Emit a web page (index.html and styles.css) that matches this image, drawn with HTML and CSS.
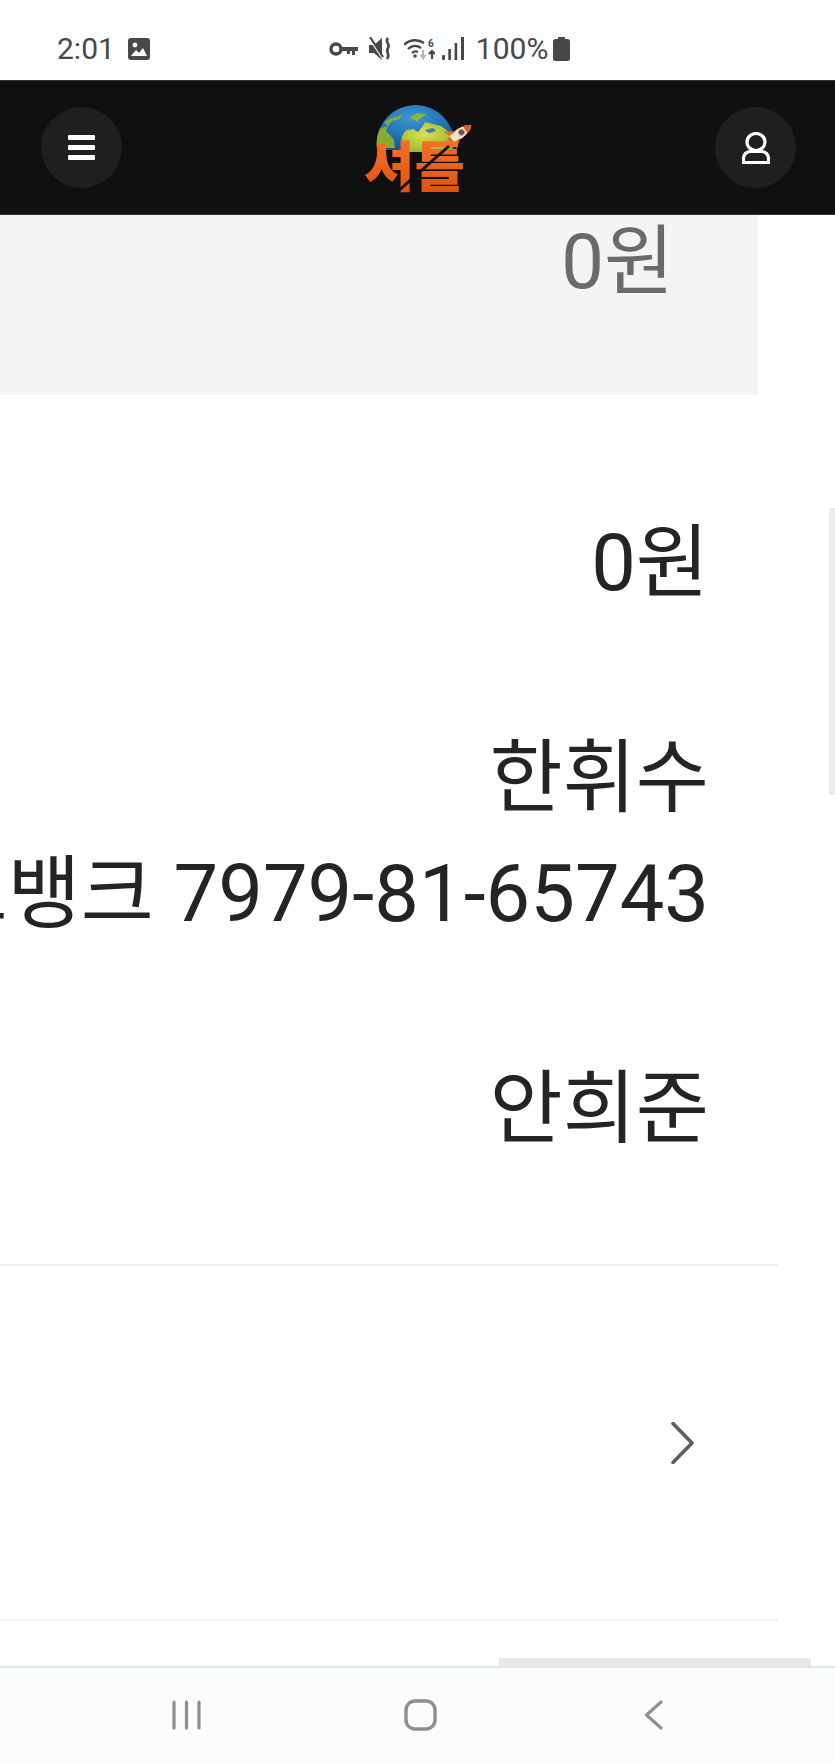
FILE: index.html
```html
<!DOCTYPE html>
<html lang="ko">
<head>
<meta charset="utf-8">
<title>계좌 정보</title>
<link rel="stylesheet" href="styles.css">
</head>
<body>
<div class="phone">
  <div class="status">
    <div class="status-left">
      <span class="clock">2:01</span>
      <svg class="ic-image" viewBox="0 0 22 22"><rect width="22" height="22" rx="3" fill="#484848"/><circle cx="7" cy="7" r="2.4" fill="#fff"/><path d="M3 18l5-6 3 3 4-5 4 8z" fill="#fff"/></svg>
    </div>
    <div class="status-right">
      <svg class="ic-key" viewBox="0 0 29 14"><circle cx="7" cy="7" r="5" fill="none" stroke="#484848" stroke-width="3.4"/><path d="M12 5h17v4h-3v4h-3V9h-2v3h-3V9h-6z" fill="#484848"/></svg>
      <svg class="ic-mute" viewBox="0 0 23 24"><path d="M0 8h5l8-7v22l-8-7H0z" fill="#484848"/><path d="M1 2l13 20" stroke="#fcfdff" stroke-width="2"/><path d="M1 0l13 20" stroke="#484848" stroke-width="2.2"/><path d="M19 1c-4 4 3 6 0 10s3 6-1 11" fill="none" stroke="#484848" stroke-width="2.6"/></svg>
      <svg class="ic-wifi" viewBox="0 0 31 23"><g fill="none" stroke="#484848" stroke-width="2.4"><path d="M0 8c6-6 14-6 20-2"/><path d="M4 12c4-4 9-4 13-1"/><path d="M8 16c2-2 4-2 6-1"/></g><circle cx="11" cy="19" r="1.8" fill="#484848"/><path d="M19 13v8l-2.500-3M19 21l2.500-3" fill="none" stroke="#b5b5b5" stroke-width="2"/><path d="M28 22v-8m-3 3l3-3 3 3" fill="none" stroke="#484848" stroke-width="2.2"/><text class="wifi-six" x="24" y="10">6</text></svg>
      <svg class="ic-signal" viewBox="0 0 22 23"><g fill="#484848"><rect x="0" y="18" width="3" height="5" rx="1"/><rect x="6.300" y="12" width="2.600" height="11"/><rect x="12.600" y="6" width="2.600" height="17"/><rect x="19" y="0" width="3" height="23"/></g></svg>
      <span class="battery-text">100%</span>
      <svg class="ic-battery" viewBox="0 0 17 24"><path d="M5 0h7v2h2.500A2.500 2.500 0 0 1 17 4.500V21.500A2.500 2.500 0 0 1 14.500 24h-12A2.500 2.500 0 0 1 0 21.500V4.500A2.500 2.500 0 0 1 2.500 2H5z" fill="#484848"/></svg>
    </div>
  </div>

  <header class="topbar">
    <button class="round-btn" aria-label="메뉴">
      <svg class="ic-menu" viewBox="0 0 27 25"><g fill="#fff"><rect width="27" height="5" rx="1"/><rect y="10" width="27" height="5" rx="1"/><rect y="20" width="27" height="5" rx="1"/></g></svg>
    </button>
    <svg class="logo" viewBox="0 0 115 95">
      <defs>
        <radialGradient id="sea" cx="0.45" cy="0.3" r="0.75"><stop offset="0" stop-color="#3a97d6"/><stop offset="1" stop-color="#0d5596"/></radialGradient>
        <radialGradient id="land" cx="0.45" cy="0.4" r="0.7"><stop offset="0" stop-color="#dbe04f"/><stop offset="1" stop-color="#93b52e"/></radialGradient>
        <linearGradient id="ember" x1="0" y1="0" x2="0" y2="1"><stop offset="0" stop-color="#fb7c2e"/><stop offset="1" stop-color="#dc4a0c"/></linearGradient>
        <clipPath id="globe-clip"><circle cx="56.500" cy="44" r="39"/></clipPath>
      </defs>
      <g clip-path="url(#globe-clip)">
        <rect x="16" y="4" width="82" height="46" fill="url(#sea)"/>
        <path d="M17 34l5-6 7-2-2 5 4 4 4 5 1 8H17z" fill="#86ab2e"/>
        <path d="M25 22l7-4 12-3-3 4-8 2-4 5z" fill="#86ab2e"/>
        <path d="M42 44c0-6 2-12 6-14l6-1 5 3 4-5 3-5 16 4 8 6 3 12 1 8H42z" fill="url(#land)"/>
        <path d="M50 18l8-5 10 1-6 4-4 4-4-3z" fill="#8db53a"/>
        <path d="M66 30l8-2 3 3-7 2z" fill="#2d7fc0"/>
      </g>
      <g transform="translate(2 8) rotate(55 98 26)">
        <path d="M98 11c5 5 6 14 4 24h-8c-2-10-1-19 4-24z" fill="#efe2d0"/>
        <path d="M98 11c2.500 2 3.600 4.500 4.300 7.500h-8.600c.7-3 1.800-5.500 4.300-7.500z" fill="#d9611d"/>
        <path d="M94 27l-7 10 7-2zM102 27l7 10-7-2z" fill="#e36a22"/>
        <path d="M94.500 35h7l-1.500 4h-4z" fill="#e36a22"/>
        <circle cx="98" cy="23" r="3" fill="#555" stroke="#e8a070" stroke-width="1"/>
      </g>
      <text class="logo-text" x="5" y="87" fill="url(#ember)" textLength="101" lengthAdjust="spacingAndGlyphs">셔틀</text>
      <path d="M37 93L90 46" stroke="#0f0f0f" stroke-width="3"/>
    </svg>
    <button class="round-btn" aria-label="내 정보">
      <svg class="ic-user" viewBox="0 0 28 32"><g fill="none" stroke="#fff" stroke-width="3.200"><ellipse cx="14" cy="10" rx="9" ry="8.500"/><path d="M1.500 30.500v-4c0-4 3-7 7-7h11c4 0 7 3 7 7v4z"/></g></svg>
    </button>
  </header>

  <main class="content">
    <section class="summary">
      <span class="summary-value">0원</span>
    </section>
    <section class="details">
      <div class="detail">0원</div>
      <div class="detail detail-holder">한휘수</div>
      <div class="detail">카카오뱅크 7979-81-65743</div>
      <div class="detail detail-name">안희준</div>
    </section>
    <a class="link-row">
      <svg class="ic-chevron" viewBox="0 0 23 42"><path d="M2 1.500l19 19.500L2 40.500" fill="none" stroke="#5e5e5e" stroke-width="3.600" stroke-linecap="round" stroke-linejoin="round"/></svg>
    </a>
    <div class="scroll-y"></div>
    <div class="scroll-x"></div>
  </main>

  <nav class="navbar">
    <svg class="ic-recent" viewBox="0 0 29 30"><g stroke="#8f8f8f" stroke-width="3.200" stroke-linecap="round"><path d="M2 2v26M14.500 2v26M27 2v26"/></g></svg>
    <svg class="ic-home" viewBox="0 0 33 32"><rect x="2" y="2" width="29" height="28" rx="9" fill="none" stroke="#8f8f8f" stroke-width="3.400"/></svg>
    <svg class="ic-back" viewBox="0 0 19 30"><path d="M17 2L2.500 15 17 28" fill="none" stroke="#8f8f8f" stroke-width="3.200" stroke-linecap="round" stroke-linejoin="round"/></svg>
  </nav>
</div>
</body>
</html>
```

FILE: styles.css
```css
* { box-sizing: border-box; }
html, body { margin: 0; padding: 0; }
body {
  width: 835px;
  height: 1763px;
  overflow: hidden;
  background: #fff;
  font-family: Roboto, "Noto Sans CJK KR", sans-serif;
}
.phone {
  display: flex;
  flex-direction: column;
  width: 835px;
  height: 1763px;
  overflow: hidden;
}

/* status bar */
.status {
  display: flex;
  align-items: center;
  height: 80px;
  padding: 17px 0 0 57px;
  flex: none;
  background: #fcfdff;
  color: #484848;
}
.status-left { display: flex; align-items: center; gap: 13px; }
.clock { font-size: 30px; line-height: 30px; }
.ic-image { width: 22px; height: 22px; }
.status-right {
  display: flex;
  align-items: center;
  margin-left: 179px;
}
.ic-key { width: 29px; height: 14px; margin-right: 11px; }
.ic-mute { width: 23px; height: 24px; margin-right: 12px; }
.ic-wifi { width: 31px; height: 23px; margin-right: 7px; }
.wifi-six { font-family: Roboto, sans-serif; font-size: 10px; font-weight: 700; fill: #484848; }
.ic-signal { width: 22px; height: 23px; margin-right: 12px; }
.battery-text { font-size: 30px; line-height: 30px; margin-right: 5px; }
.ic-battery { width: 17px; height: 24px; }

/* top bar */
.topbar {
  display: flex;
  align-items: center;
  justify-content: space-between;
  height: 135px;
  flex: none;
  padding: 0 39px 0 41px;
  background: #101010;
  border-top: 1px solid #333;
  border-bottom: 1px solid #333;
}
.round-btn {
  display: flex;
  align-items: center;
  justify-content: center;
  width: 81px;
  height: 81px;
  padding: 0;
  border: 0;
  border-radius: 50%;
  background: #1f1f1f;
}
.ic-menu { width: 27px; height: 25px; }
.ic-user { width: 28px; height: 32px; }
.logo { width: 115px; height: 95px; margin-left: -4px; overflow: visible; }
.logo-text {
  font-family: "Noto Sans CJK KR", sans-serif;
  font-size: 54px;
  font-weight: 900;
}

/* content */
.content {
  position: relative;
  flex: 1;
  min-height: 0;
}
.summary {
  display: flex;
  justify-content: flex-end;
  width: 758px;
  height: 180px;
  padding-right: 84px;
  background: #f3f5f5;
}
.summary-value {
  font-size: 76px;
  line-height: 76px;
  margin-top: 9px;
  color: #6a6a6a;
}
.details {
  display: flex;
  flex-direction: column;
  width: 778px;
  height: 871px;
  padding: 109px 69px 0 0;
  border-bottom: 2px solid #f0f0f0;
}
.detail {
  display: flex;
  justify-content: flex-end;
  flex: none;
  height: 118px;
  font-size: 79.5px;
  line-height: 118px;
  color: #242424;
  white-space: nowrap;
}
.detail-holder { margin-top: 97px; height: 116px; }
.detail-name { margin-top: 97px; }
.link-row {
  display: flex;
  align-items: center;
  justify-content: flex-end;
  width: 778px;
  height: 355px;
  padding-right: 84px;
  border-bottom: 2px solid #f0f0f0;
}
.ic-chevron { width: 23px; height: 42px; }
.scroll-y {
  position: absolute;
  top: 293px;
  right: 0;
  width: 6px;
  height: 287px;
  background: #ececec;
}
.scroll-x {
  position: absolute;
  left: 499px;
  bottom: 0;
  width: 312px;
  height: 8px;
  background: #e8e8e8;
}

/* navigation bar */
.navbar {
  height: 97px;
  flex: none;
  display: grid;
  grid-template-columns: 172px 29px 203px 33px 207px 19px;
  align-items: start;
  padding-top: 32px;
  background: #fbfcfe;
  border-top: 2px solid #dfe6ea;
}
.ic-recent { grid-column: 2; width: 29px; height: 30px; }
.ic-home { grid-column: 4; width: 33px; height: 32px; margin-top: -1px; }
.ic-back { grid-column: 6; width: 19px; height: 30px; }
```
